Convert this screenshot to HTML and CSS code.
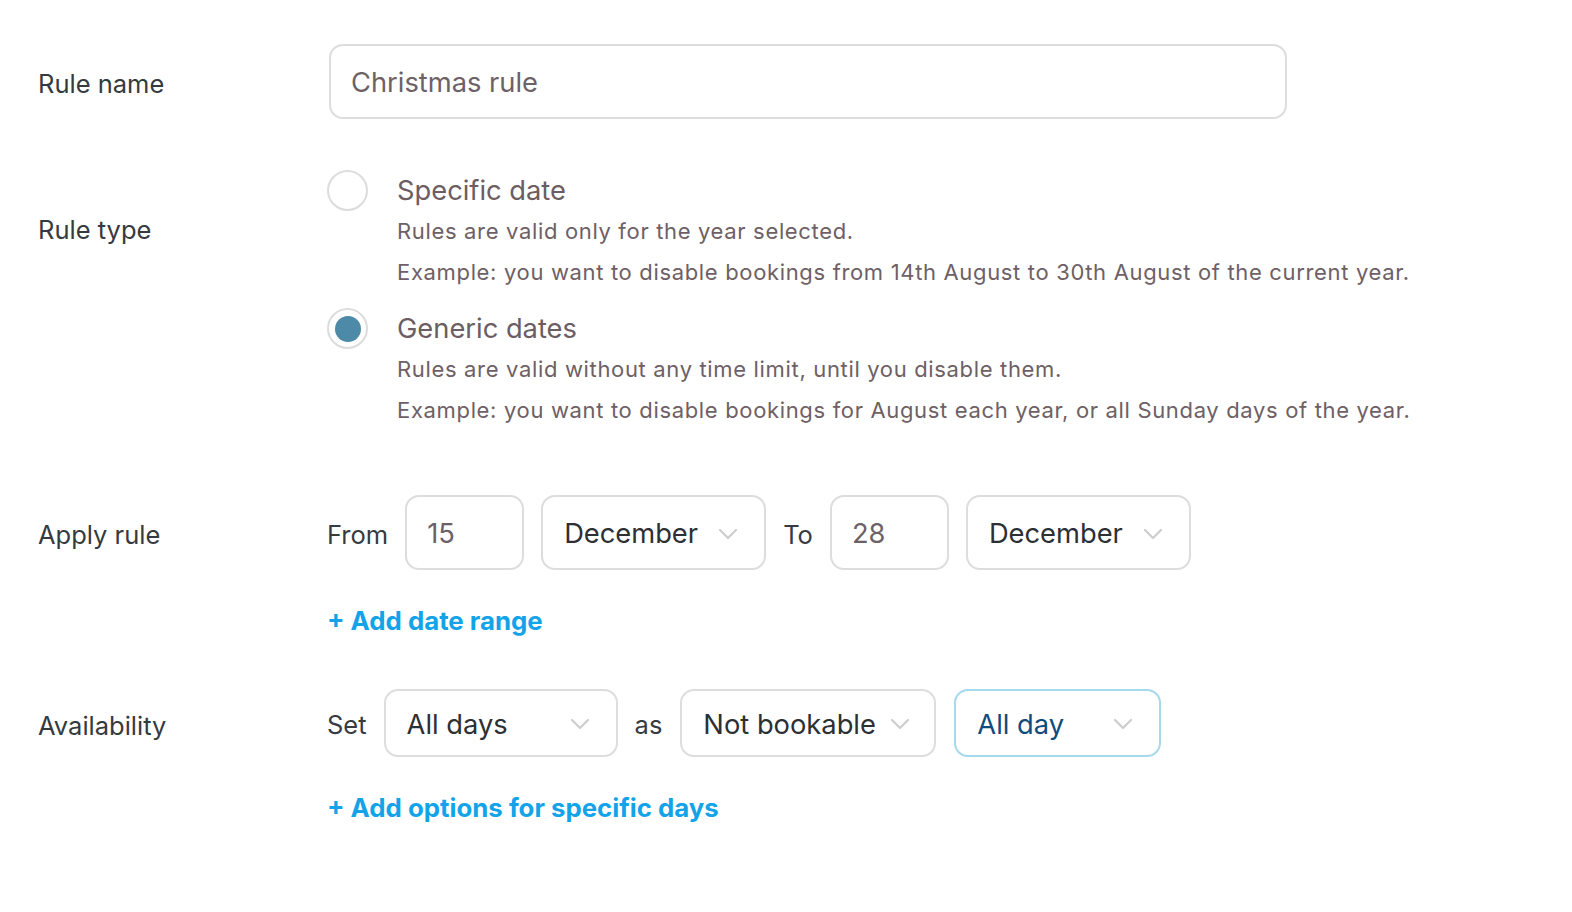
FILE: index.html
```html
<!DOCTYPE html>
<html lang="en">
<head>
<meta charset="utf-8">
<title>Rule</title>
<link rel="stylesheet" href="styles.css">
</head>
<body>
<div class="form">
  <div class="row row-name">
    <div class="label">Rule name</div>
    <div class="field">
      <div class="text-input input-name">Christmas rule</div>
    </div>
  </div>

  <div class="row row-type">
    <div class="label label-type">Rule type</div>
    <div class="field options">
      <div class="option">
        <span class="radio"></span>
        <div class="option-body">
          <div class="option-title">Specific date</div>
          <div class="option-desc">Rules are valid only for the year selected.</div>
          <div class="option-desc">Example: you want to disable bookings from 14th August to 30th August of the current year.</div>
        </div>
      </div>
      <div class="option">
        <span class="radio checked"><span class="dot"></span></span>
        <div class="option-body">
          <div class="option-title">Generic dates</div>
          <div class="option-desc">Rules are valid without any time limit, until you disable them.</div>
          <div class="option-desc">Example: you want to disable bookings for August each year, or all Sunday days of the year.</div>
        </div>
      </div>
    </div>
  </div>

  <div class="row row-apply">
    <div class="label">Apply rule</div>
    <div class="field">
      <div class="inline">
        <span class="word">From</span>
        <div class="text-input day">15</div>
        <div class="select month"><span>December</span><svg class="chev" viewBox="0 0 20 12"><path d="M2 2 L10 10 L18 2"/></svg></div>
        <span class="word">To</span>
        <div class="text-input day">28</div>
        <div class="select month"><span>December</span><svg class="chev" viewBox="0 0 20 12"><path d="M2 2 L10 10 L18 2"/></svg></div>
      </div>
      <a class="add-link link-range">+ Add date range</a>
    </div>
  </div>

  <div class="row row-avail">
    <div class="label">Availability</div>
    <div class="field">
      <div class="inline">
        <span class="word">Set</span>
        <div class="select small days"><span>All days</span><svg class="chev" viewBox="0 0 20 12"><path d="M2 2 L10 10 L18 2"/></svg></div>
        <span class="word">as</span>
        <div class="select small bookable"><span>Not bookable</span><svg class="chev" viewBox="0 0 20 12"><path d="M2 2 L10 10 L18 2"/></svg></div>
        <div class="select small allday active"><span>All day</span><svg class="chev" viewBox="0 0 20 12"><path d="M2 2 L10 10 L18 2"/></svg></div>
      </div>
      <a class="add-link link-options">+ Add options for specific days</a>
    </div>
  </div>
</div>
</body>
</html>
```

FILE: styles.css
```css
* { box-sizing: border-box; }

html, body {
  margin: 0;
  padding: 0;
  background: #ffffff;
}

body {
  font-family: Inter, "Noto Sans", "Liberation Sans", sans-serif;
  color: #34393f;
}

.form {
  padding: 44px 0 0 38px;
}

.row {
  display: flex;
  align-items: flex-start;
}

.label {
  width: 289px;
  flex: none;
  height: 75px;
  display: flex;
  align-items: center;
  padding-top: 4px;
  font-size: 25.5px;
  color: #353a40;
}

.field {
  flex: 1;
}

.text-input {
  border: 2px solid #dedcdd;
  border-radius: 14px;
  height: 75px;
  display: flex;
  align-items: center;
  color: #6e6166;
  font-size: 27.3px;
  padding-top: 2px;
}

.input-name {
  width: 958px;
  margin-left: 2px;
  padding-left: 20px;
}

/* Rule type */
.row-type {
  margin-top: 51px;
}

.label-type {
  height: auto;
  line-height: 41px;
  padding-top: 0;
  margin-top: 39px;
}

.options {
  display: flex;
  flex-direction: column;
  gap: 15px;
}

.option {
  display: flex;
  align-items: flex-start;
}

.radio {
  flex: none;
  width: 41px;
  height: 41px;
  border-radius: 50%;
  border: 2px solid #dcdcdc;
  display: flex;
  align-items: center;
  justify-content: center;
  margin-right: 29px;
}

.radio .dot {
  width: 26px;
  height: 26px;
  border-radius: 50%;
  background: #4c8aa8;
}

.option-title {
  font-size: 27.3px;
  line-height: 40px;
  padding-top: 1px;
  color: #6b5d62;
}

.option-desc {
  font-size: 22px;
  letter-spacing: 0.66px;
  line-height: 41px;
  color: #6e6065;
}

/* Apply rule */
.row-apply {
  margin-top: 64px;
}

.inline {
  display: flex;
  align-items: center;
}

.word {
  font-size: 25.5px;
  color: #363b41;
  padding-top: 3px;
}

.day {
  width: 119px;
  padding-left: 20px;
  margin-left: 17px;
  margin-right: 17px;
}

.select {
  border: 2px solid #dedcdd;
  border-radius: 14px;
  height: 75px;
  display: flex;
  align-items: center;
  justify-content: space-between;
  padding: 2px 26px 0 21px;
  font-size: 27.3px;
  color: #2c3035;
  background: #fff;
}

.month {
  width: 225px;
  margin-right: 17px;
}

.chev {
  width: 20px;
  height: 12px;
  flex: none;
}

.chev path {
  fill: none;
  stroke: #cdcdcd;
  stroke-width: 2.2;
  stroke-linecap: round;
  stroke-linejoin: round;
}

.add-link {
  display: block;
  font-size: 25.8px;
  font-weight: 700;
  color: #12a3e9;
  line-height: 34px;
  cursor: pointer;
  padding-top: 2px;
}

.link-range {
  margin-top: 32px;
}

/* Availability */
.row-avail {
  margin-top: 51px;
}

.row-avail .label {
  height: 68px;
}

.select.small {
  height: 68px;
}

.days {
  width: 234px;
  margin-left: 17px;
  margin-right: 17px;
}

.bookable {
  width: 256px;
  margin-left: 18px;
  margin-right: 18px;
  padding-right: 24px;
}

.allday {
  width: 207px;
}

.select.active {
  border-color: #a6d8ee;
  color: #0f4b7c;
}

.link-options {
  margin-top: 32px;
}
```
